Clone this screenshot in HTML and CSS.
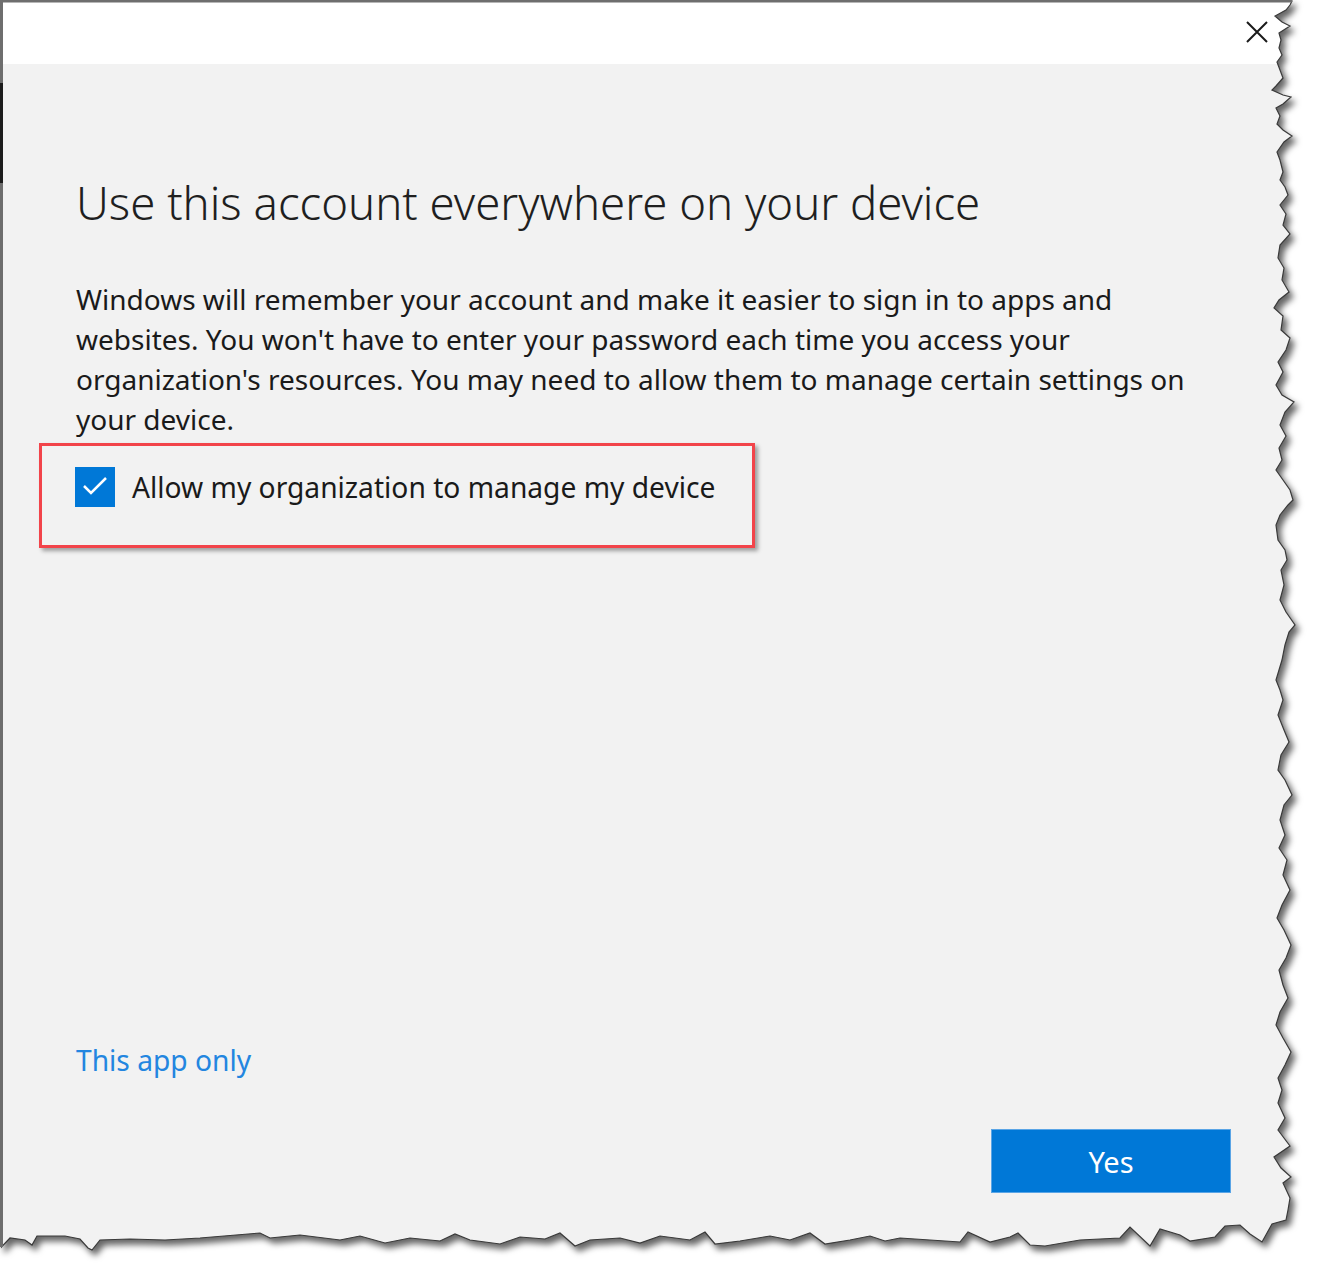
FILE: index.html
```html
<!DOCTYPE html>
<html lang="en">
<head>
    <meta charset="UTF-8">
    <title>Use this account everywhere on your device</title>
    <link rel="stylesheet" href="styles.css">
</head>
<body>
    <div class="frame">
        <!-- torn paper outline of the screenshot -->
        <svg class="paper" width="1317" height="1272" viewBox="0 0 1317 1272">
            <defs>
                <linearGradient id="sheet" gradientUnits="userSpaceOnUse" x1="0" y1="0" x2="0" y2="1272">
                    <stop offset="0.0505" stop-color="#ffffff"/>
                    <stop offset="0.0505" stop-color="#f2f2f2"/>
                </linearGradient>
            </defs>
            <path class="edge" fill="url(#sheet)" d="M1.5,1 L1292,1 L1290,5 L1286,10 L1275,16 L1282,22 L1290,26 L1279,33 L1281,40 L1279,48 L1282,55 L1277,62 L1280,70 L1283,78 L1276,86 L1272,90 L1283,95 L1291,97 L1283,104 L1276,108 L1280,116 L1277,124 L1283,130 L1292,136 L1284,142 L1277,152 L1280,160 L1283,172 L1280,180 L1285,187 L1288,195 L1280,205 L1286,214 L1283,225 L1290,234 L1280,245 L1278,258 L1284,268 L1282,280 L1289,292 L1279,300 L1274,308 L1283,316 L1281,330 L1290,338 L1286,350 L1278,362 L1283,372 L1276,385 L1282,395 L1294,402 L1285,412 L1280,425 L1286,436 L1279,448 L1282,460 L1276,470 L1283,480 L1290,490 L1293,500 L1288,505 L1280,515 L1276,525 L1278,540 L1285,550 L1287,560 L1281,570 L1284,585 L1280,600 L1286,612 L1295,625 L1289,632 L1285,645 L1282,660 L1276,680 L1280,690 L1283,700 L1278,715 L1284,730 L1289,742 L1281,755 L1278,770 L1285,780 L1292,795 L1284,805 L1280,820 L1285,835 L1279,848 L1287,860 L1283,875 L1290,890 L1282,905 L1277,918 L1284,930 L1291,945 L1286,958 L1279,970 L1283,985 L1288,998 L1280,1012 L1276,1025 L1283,1038 L1291,1052 L1285,1065 L1278,1078 L1282,1090 L1278,1103 L1285,1118 L1278,1130 L1290,1146 L1274,1157 L1281,1168 L1291,1177 L1283,1183 L1290,1198 L1288,1210 L1286,1220 L1272,1224 L1262,1242 L1250,1234 L1240,1225 L1225,1226 L1215,1237 L1190,1241 L1180,1235 L1160,1229 L1150,1246 L1130,1227 L1120,1238 L1080,1240 L1045,1246 L1030,1245 L1018,1233 L1010,1237 L990,1242 L968,1232 L960,1242 L930,1240 L900,1238 L885,1241 L870,1236 L850,1240 L825,1244 L810,1233 L790,1240 L770,1236 L740,1241 L715,1244 L705,1232 L690,1240 L660,1236 L640,1243 L620,1238 L590,1240 L575,1246 L560,1233 L545,1239 L520,1237 L500,1244 L470,1240 L455,1234 L440,1241 L410,1238 L385,1243 L360,1236 L340,1240 L300,1235 L290,1236 L270,1238 L260,1233 L200,1238 L165,1240 L130,1239 L100,1240 L92,1250 L88,1248 L80,1239 L65,1236 L37,1236 L32,1245 L25,1240 L10,1238 L1.5,1247 Z"/>
            <path class="border" d="M1.5,1247 L1.5,1 L1292,1"/>
            <path class="border-dark" d="M1.5,83 L1.5,183"/>
        </svg>

        <div class="dialog">
            <div class="titlebar">
                <button class="close" aria-label="Close">
                    <svg width="22" height="22" viewBox="0 0 22 22">
                        <path d="M1 1 L21 21 M21 1 L1 21" stroke="#1a1a1a" stroke-width="2" fill="none"/>
                    </svg>
                </button>
            </div>

            <div class="content">
                <h1 class="title">Use this account everywhere on your device</h1>
                <p class="intro">Windows will remember your account and make it easier to sign in to apps and websites. You won't have to enter your password each time you access your organization's resources. You may need to allow them to manage certain settings on your device.</p>

                <div class="highlight">
                    <label class="check">
                        <span class="box">
                            <svg width="40" height="40" viewBox="0 0 40 40">
                                <polyline points="9,19 16,26 31,11" stroke="#fff" stroke-width="2.5" fill="none"/>
                            </svg>
                        </span>
                        <span class="check-label">Allow my organization to manage my device</span>
                    </label>
                </div>

                <div class="footer">
                    <a class="link" href="#">This app only</a>
                    <div class="actions">
                        <button class="btn-primary">Yes</button>
                    </div>
                </div>
            </div>
        </div>
    </div>
</body>
</html>
```

FILE: styles.css
```css
body {
    margin: 0;
    background: #fff;
    font-family: 'Noto Sans', 'Open Sans', sans-serif;
    color: #1a1a1a;
}

.frame {
    position: relative;
    width: 1317px;
    height: 1272px;
    overflow: hidden;
}

.paper {
    position: absolute;
    top: 0;
    left: 0;
    filter: drop-shadow(4px 5px 3px rgba(0, 0, 0, 0.6));
}

.paper .edge {
    stroke: #3a3a3a;
    stroke-width: 1.2;
    stroke-linejoin: miter;
}

.paper .border {
    fill: none;
    stroke: #6e6e6e;
    stroke-width: 3;
}

.paper .border-dark {
    fill: none;
    stroke: #1c1c1c;
    stroke-width: 3;
}

.dialog {
    position: relative;
    width: 1285px;
    height: 1240px;
    display: flex;
    flex-direction: column;
}

.titlebar {
    height: 64px;
    display: flex;
    justify-content: flex-end;
    align-items: center;
    padding-right: 17px;
}

.close {
    background: none;
    border: none;
    padding: 0;
    width: 22px;
    height: 22px;
    display: flex;
    cursor: pointer;
}

.content {
    flex: 1;
    display: flex;
    flex-direction: column;
    padding: 0 54px 47px 76px;
}

.title {
    font-size: 45.5px;
    font-weight: 300;
    line-height: 60px;
    margin: 108px 0 0;
    color: #1f1f1f;
}

.intro {
    font-size: 28px;
    line-height: 40px;
    margin: 47px 0 0;
    width: 1130px;
}

.highlight {
    margin: 4px 0 0 -37px;
    width: 716px;
    height: 105px;
    box-sizing: border-box;
    border: 3px solid #f2444a;
    padding: 21px 0 0 33px;
    box-shadow: 3px 3px 4px rgba(0, 0, 0, 0.35);
}

.check {
    display: flex;
    align-items: center;
    gap: 17px;
    font-size: 28.2px;
    cursor: pointer;
}

.box {
    width: 40px;
    height: 40px;
    background: #0078d7;
    display: flex;
}

.footer {
    margin-top: auto;
    display: flex;
    flex-direction: column;
}

.link {
    font-size: 28.2px;
    line-height: 40px;
    color: #2386e0;
    text-decoration: none;
    align-self: flex-start;
}

.actions {
    display: flex;
    justify-content: flex-end;
    margin-top: 49px;
}

.btn-primary {
    width: 240px;
    height: 64px;
    background: #0078d7;
    border: 1px solid #5aa5e6;
    color: #fff;
    font-family: inherit;
    font-size: 29px;
    cursor: pointer;
}
```
